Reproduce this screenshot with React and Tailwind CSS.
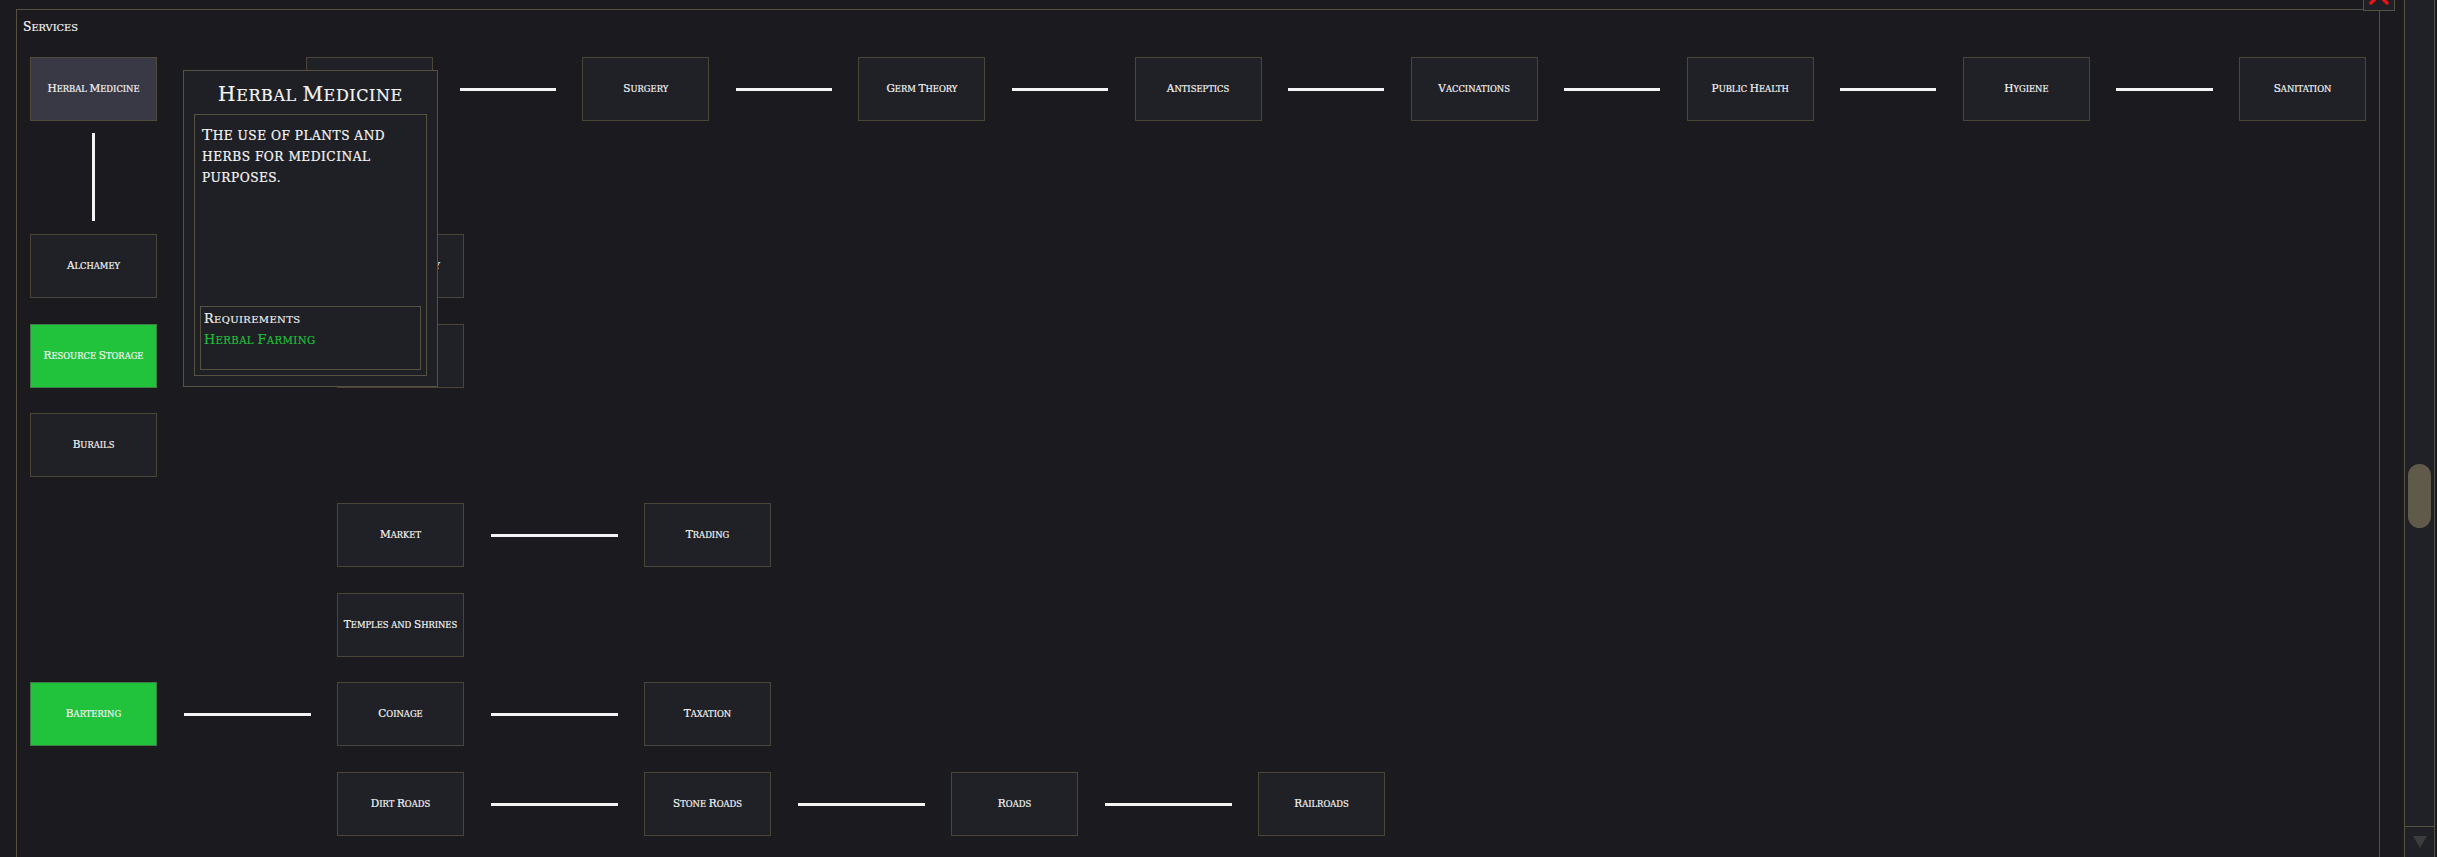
import React from "react";

// Renders Cinzel-like small caps: original capitals at capCls size, the rest uppercased at scCls size.
function SC({ text, capCls, scCls }) {
  const runs = [];
  let cur = null;
  for (const ch of text) {
    const isCap = ch !== ch.toLowerCase();
    if (!cur || cur.cap !== isCap) {
      cur = { cap: isCap, s: "" };
      runs.push(cur);
    }
    cur.s += ch;
  }
  return (
    <span className="uppercase">
      {runs.map((r, i) => (
        <span key={i} className={`leading-none ${r.cap ? capCls : scCls}`}>
          {r.s}
        </span>
      ))}
    </span>
  );
}

function Node({ label, variant }) {
  const tone =
    variant === "green"
      ? "bg-[#22c33c] border-[#3f7d46]"
      : variant === "active"
      ? "bg-[#393945] border-[#4f4a3b]"
      : "bg-[#202126] border-[#4a4537]";
  return (
    <div
      className={`flex h-[64px] w-[127px] shrink-0 items-center justify-center border px-1 pb-[2px] text-center font-['DejaVu_Serif',serif] text-[10.5px] leading-[12px] text-[#f4f4f4] [-webkit-text-stroke:0.2px_currentColor] ${tone}`}
    >
      {label ? <SC text={label} capCls="text-[10.5px]" scCls="text-[8.4px]" /> : null}
    </div>
  );
}

function HLine() {
  return <div className="mx-[26.5px] h-[3px] w-[127px] min-w-0 shrink self-center bg-[#f4f4f4]" />;
}

function Gap() {
  return <div className="mx-[26.5px] w-[127px] shrink-0" />;
}

function Empty() {
  return <div className="h-[64px] w-[127px] shrink-0" />;
}

function Row({ children }) {
  return <div className="flex items-center">{children}</div>;
}

function Tooltip() {
  return (
    <div className="absolute left-[183px] top-[70px] flex h-[317px] w-[255px] flex-col border border-[#575141] bg-[#1f2025] font-['DejaVu_Serif',serif] text-[#f4f4f4] [-webkit-text-stroke:0.2px_currentColor]">
      <div className="flex h-[43px] shrink-0 items-center justify-center pt-[2px] text-[20px] leading-[24px] tracking-[0.6px]">
        <SC text="Herbal Medicine" capCls="text-[20px]" scCls="text-[16px]" />
      </div>
      <div className="flex min-h-0 flex-1 px-[10px] pb-[10px]">
        <div className="flex flex-1 flex-col border border-[#575141] p-[5px]">
          <div className="mt-[5px] pl-[2px] text-[15.2px] leading-[20.8px] tracking-[0.5px]">
            <SC text="The use of plants and" capCls="text-[15.2px]" scCls="text-[12.2px]" />
            <br />
            <SC text="herbs for medicinal" capCls="text-[15.2px]" scCls="text-[12.2px]" />
            <br />
            <SC text="purposes." capCls="text-[15.2px]" scCls="text-[12.2px]" />
          </div>
          <div className="mt-auto h-[64px] border border-[#575141] px-[3px] pt-[2px] text-[12.8px] leading-[20.7px] tracking-[0.35px]">
            <div className="text-[#ededed]">
              <SC text="Requirements" capCls="text-[12.8px]" scCls="text-[10px]" />
            </div>
            <div className="text-[#1fbd3a]">
              <SC text="Herbal Farming" capCls="text-[12.8px]" scCls="text-[10.2px]" />
            </div>
          </div>
        </div>
      </div>
    </div>
  );
}

export default function App() {
  return (
    <div className="relative flex h-[857px] w-full overflow-hidden bg-[#1a1a1f]">
      {/* main panel */}
      <div className="relative ml-[16px] mr-[24px] mt-[9px] h-[900px] w-[2364px] shrink-0 border-x border-t border-[#565040]">
        <div className="h-[36px] pl-[6px] pt-[8px] font-['DejaVu_Serif',serif] text-[12.3px] leading-[18px] text-[#f4f4f4] [-webkit-text-stroke:0.2px_currentColor]">
          <SC text="Services" capCls="text-[12.3px]" scCls="text-[9.8px]" />
        </div>

        <div className="mt-[11px] flex flex-col px-[13px]">
          <Row>
            <Node label="Herbal Medicine" variant="active" />
            <HLine />
            <Node label="" />
            <HLine />
            <Node label="Surgery" />
            <HLine />
            <Node label="Germ Theory" />
            <HLine />
            <Node label="Antiseptics" />
            <HLine />
            <Node label="Vaccinations" />
            <HLine />
            <Node label="Public Health" />
            <HLine />
            <Node label="Hygiene" />
            <HLine />
            <Node label="Sanitation" />
          </Row>

          <div className="mb-[13px] mt-[12px] flex w-[127px] justify-center">
            <div className="h-[88px] w-[3px] bg-[#f4f4f4]" />
          </div>

          <div className="flex flex-col gap-[25.7px]">
            <Row>
              <Node label="Alchamey" />
              <Gap />
              <Node label="Pharmacology" />
            </Row>
            <Row>
              <Node label="Resource Storage" variant="green" />
              <Gap />
              <Node label="Granaries" />
            </Row>
            <Row>
              <Node label="Burails" />
            </Row>
            <Row>
              <Empty />
              <Gap />
              <Node label="Market" />
              <HLine />
              <Node label="Trading" />
            </Row>
            <Row>
              <Empty />
              <Gap />
              <Node label="Temples and Shrines" />
            </Row>
            <Row>
              <Node label="Bartering" variant="green" />
              <HLine />
              <Node label="Coinage" />
              <HLine />
              <Node label="Taxation" />
            </Row>
            <Row>
              <Empty />
              <Gap />
              <Node label="Dirt Roads" />
              <HLine />
              <Node label="Stone Roads" />
              <HLine />
              <Node label="Roads" />
              <HLine />
              <Node label="Railroads" />
            </Row>
          </div>
        </div>

        {/* close button */}
        <div className="absolute -right-[16px] -top-[31px] flex h-[32px] w-[32px] items-center justify-center border border-[#575141] bg-[#1f2025]">
          <svg width="22" height="22" viewBox="0 0 22 22">
            <path d="M3 3 L19 19 M19 3 L3 19" stroke="#e51414" strokeWidth="3.5" strokeLinecap="round" />
          </svg>
        </div>
      </div>

      {/* scrollbar */}
      <div className="mr-[2px] flex w-[31px] shrink-0 flex-col border-x border-[#575141] bg-[#202126]">
        <div className="flex-1 pl-[3px]">
          <div className="mt-[464px] h-[64px] w-[23px] rounded-full bg-[#5f5a4a]" />
        </div>
        <div className="flex h-[31px] shrink-0 items-center justify-center border-t border-[#575141]">
          <svg width="14" height="12" viewBox="0 0 14 12">
            <path d="M0 0 L14 0 L7 12 Z" fill="#3c3c3e" />
          </svg>
        </div>
      </div>

      <Tooltip />
    </div>
  );
}
